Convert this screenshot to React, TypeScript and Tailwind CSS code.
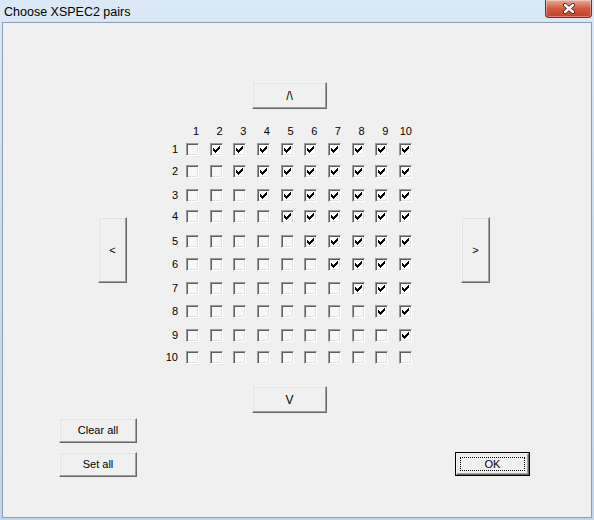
const rowHeights = [
  "h-[22px]",
  "h-[24px]",
  "h-[21px]",
  "h-[25px]",
  "h-[23px]",
  "h-[24px]",
  "h-[23px]",
  "h-[24px]",
  "h-[22px]",
  "h-[13px]",
];

const cols = [1, 2, 3, 4, 5, 6, 7, 8, 9, 10];

const btn =
  "flex items-center justify-center bg-[#f0f0f0] border border-t-[#f4f4f4] border-l-[#f4f4f4] border-r-[#696969] border-b-[#696969] shadow-[inset_-1px_-1px_0_#a0a0a0,inset_1px_1px_0_#e3e3e3] text-[11px] text-black";

function Check() {
  // classic 7x7 tick
  return (
    <svg width="7" height="7" viewBox="0 0 7 7" shapeRendering="crispEdges">
      <path
        d="M6 0h1v1h-1zM5 1h2v1h-2zM0 2h1v1h-1zM4 2h3v1h-3zM0 3h2v1h-2zM3 3h3v1h-3zM0 4h5v1h-5zM1 5h3v1h-3zM2 6h1v1h-1z"
        fill="#000"
      />
    </svg>
  );
}

function Box({ checked }: { checked: boolean }) {
  return (
    <div
      className={`w-[13px] h-[13px] flex items-center justify-center border border-t-[#9a9a9a] border-l-[#9a9a9a] border-r-white border-b-white shadow-[inset_1px_1px_0_#5f5f5f,inset_-1px_-1px_0_#e3e3e3] ${
        checked ? "bg-white" : "bg-[#f7f7f7]"
      }`}
    >
      {checked && <Check />}
    </div>
  );
}

export default function App() {
  return (
    <div className="w-[594px] h-[520px] overflow-hidden bg-gradient-to-b from-[#dbe8f6] via-[#c9dbef] to-[#c2d5ea] font-['Liberation_Sans',Arial,sans-serif] select-none">
      {/* Title bar */}
      <div className="h-[22px] flex items-start justify-between">
        <span className="pl-[4px] pt-[5px] text-[12.5px] leading-[14px] text-black">
          Choose XSPEC2 pairs
        </span>
        <div className="mr-[2px] w-[47px] h-[18px] rounded-b-[4px] border border-t-0 border-[#7d2b1e] bg-gradient-to-b from-[#e9a898] via-[#d25a41] to-[#c2412a] shadow-[inset_0_0_0_1px_rgba(255,255,255,0.35)] flex items-center justify-center">
          <svg width="14" height="11" viewBox="0 0 14 11">
            <path d="M3 2L11 9M11 2L3 9" stroke="#5a1d12" strokeWidth="4" strokeLinecap="round" />
            <path d="M3 2L11 9M11 2L3 9" stroke="#fff" strokeWidth="2.4" strokeLinecap="round" />
          </svg>
        </div>
      </div>

      {/* Client area */}
      <div className="ml-[2px] w-[590px] h-[496px] border border-[#8c9fb6] bg-[#f0f0f0]">
        <div className="flex items-start">
          <button type="button" className={`${btn} ml-[95px] mt-[194px] w-[29px] h-[66px]`}>
            &lt;
          </button>

          <div className="ml-[33px] w-[252px] pt-[59px]">
            <button type="button" className={`${btn} ml-[92px] w-[75px] h-[27px] text-[12px]`}>
              /\
            </button>

            {/* column headers */}
            <div className="mt-[15px] h-[19px] flex text-[11px] leading-[13px] pt-[1px]">
              <div className="w-[26px] shrink-0" />
              {cols.map((c) => (
                <div key={c} className="w-[23.67px] shrink-0">
                  <div className="w-[13px] text-right whitespace-nowrap">{c}</div>
                </div>
              ))}
            </div>

            {/* checkbox rows */}
            {cols.map((r, i) => (
              <div key={r} className={`${rowHeights[i]} flex items-start text-[11px] leading-[13px]`}>
                <div className="w-[26px] shrink-0 pr-[8px] text-right">{r}</div>
                {cols.map((c) => (
                  <div key={c} className="w-[23.67px] shrink-0">
                    <Box checked={c > r} />
                  </div>
                ))}
              </div>
            ))}

            <button type="button" className={`${btn} mt-[22px] ml-[92px] w-[75px] h-[27px] text-[12px]`}>
              V
            </button>
          </div>

          <button type="button" className={`${btn} ml-[49px] mt-[194px] w-[29px] h-[66px]`}>
            &gt;
          </button>
        </div>

        {/* Bottom buttons */}
        <div className="mt-[5px] flex items-start">
          <div className="ml-[56px] flex flex-col gap-[9px]">
            <button type="button" className={`${btn} w-[78px] h-[25px]`}>
              Clear all
            </button>
            <button type="button" className={`${btn} w-[78px] h-[25px]`}>
              Set all
            </button>
          </div>
          <div className="ml-[318px] mt-[34px] w-[75px] h-[24px] border border-black">
            <button type="button" className={`${btn} relative w-full h-full`}>
              <span className="absolute inset-[3px] border border-dotted border-black" />
              OK
            </button>
          </div>
        </div>
      </div>
    </div>
  );
}
